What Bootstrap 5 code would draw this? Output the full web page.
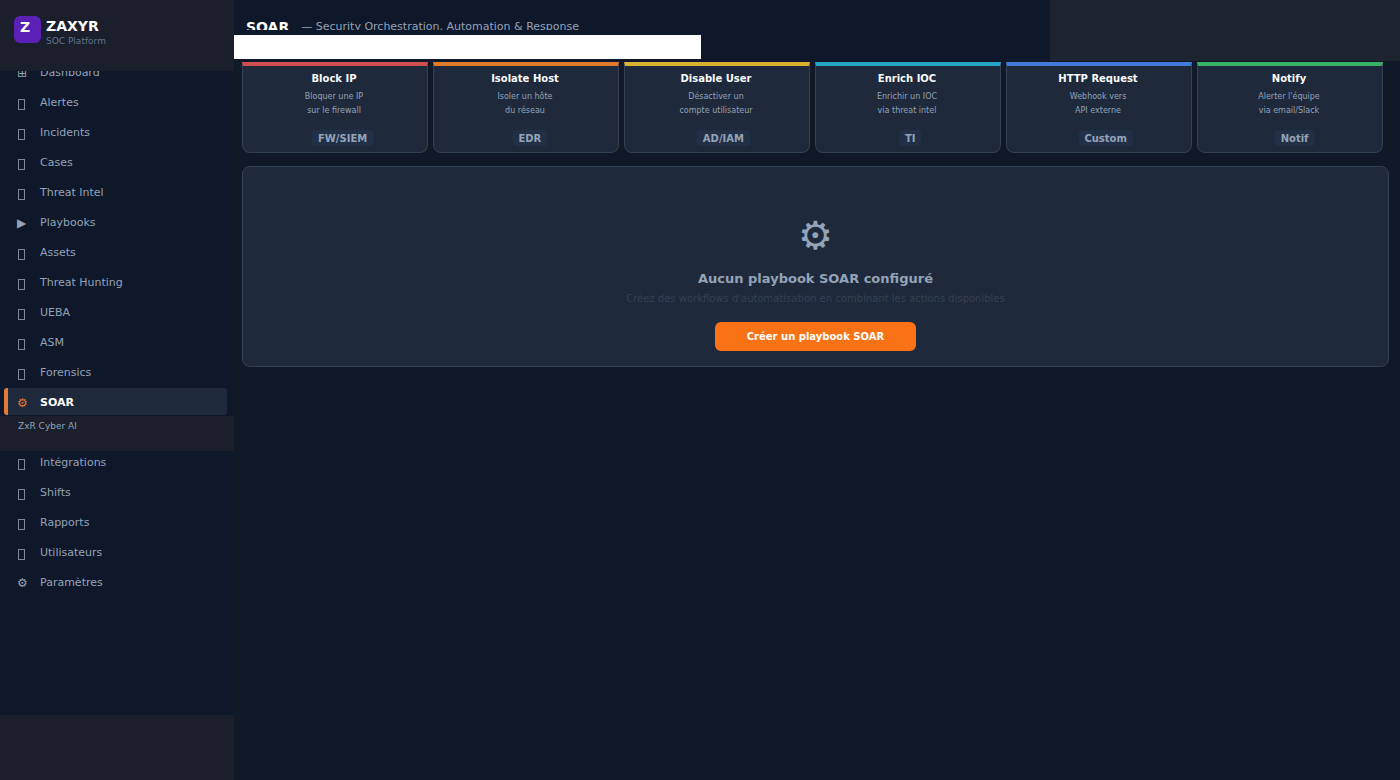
<!DOCTYPE html>
<html lang="fr">
<head>
<meta charset="utf-8">
<meta name="viewport" content="width=device-width, initial-scale=1">
<title>ZAXYR — SOAR</title>
<link href="https://cdn.jsdelivr.net/npm/bootstrap@5.3.0/dist/css/bootstrap.min.css" rel="stylesheet">
<style>
  body { background: #111827; color: #94a3b8; font: 11px/14px "DejaVu Sans", sans-serif; }
  .sidebar { width: 234px; background: #0f172a; }
  .brand { height: 71px; background: #1a1f2b; padding: 16px 14px; gap: 5px; z-index: 1; }
  .logo { width: 27px; height: 27px; border-radius: 6px; background: #5b21b6; font-size: 14px; line-height: 22px; padding-left: 6px; }
  .brand-name { font-size: 14px; line-height: 20px; }
  .brand-sub { font-size: 9px; line-height: 10px; color: #64748b; }
  .side-nav { margin-top: -14px; }
  .side-link { height: 30px; padding: 2px 0 0 17px; gap: 13px; color: #94a3b8; }
  .side-link:hover { color: #fff; }
  .side-link.active { height: 27px; margin: 1px 7px 1px 4px; padding-left: 9px; border-left: 4px solid #e07b39; border-radius: 3px; background: #1e293b; color: #fff; font-weight: 700; }
  .side-link.active .ico { color: #e07b39; font-weight: 400; }
  .ico { width: 10px; font-size: 12px; }
  .box { display: block; width: 7px; height: 11px; border: 1px solid #7b889c; margin: 2px 0 0 1px; }
  .ai-block { height: 35px; margin-bottom: -4px; padding: 3px 18px; background: #1a1f2b; font-size: 9px; position: relative; z-index: 1; }
  .side-foot { height: 65px; background: #1a1f2b; }
  .topbar { height: 61px; background: #0f172a; }
  .heading { height: 30px; padding: 18px 12px 0; gap: 12px; line-height: 18px; }
  .heading h1 { font-size: 14px; line-height: 18px; }
  .strip { width: 57.2%; height: 24px; margin-top: 5px; background: #fff; }
  .topbar-end { width: 30%; background: #1e2330; }
  .content { padding: 1px 11px 0 8px; }
  .actions { display: grid; grid-template-columns: repeat(6, 1fr); gap: 5px; padding-right: 6px; margin-bottom: 13px; }
  .action { height: 91px; background: #1e293b; border: 1px solid #334155; border-top: 4px solid var(--tone); border-radius: 0 0 8px 8px; padding: 6px 2px 0 0; }
  .action h2 { font-size: 10px; line-height: 14px; color: #f8fafc; margin-bottom: 4px; }
  .action p { font-size: 8px; margin-bottom: 12px; }
  .tag { background: #223047; border-radius: 3px; font-size: 10px; line-height: 14px; padding: 2px 6px 0; transform: translateX(14%); }
  .t-red { --tone: #cf4f4f; } .t-orange { --tone: #df7a2c; } .t-yellow { --tone: #d9b031; }
  .t-cyan { --tone: #25a5c4; } .t-blue { --tone: #4479dc; } .t-green { --tone: #37b163; }
  .panel { height: 201px; background: #1e293b; border: 1px solid #334155; border-radius: 8px; padding-top: 46px; }
  .gear { font-size: 39px; line-height: 46px; }
  .panel h2 { font-size: 13px; line-height: 18px; margin: 11px 0 4px; }
  .hint { font-size: 10px; color: #334155; margin-bottom: 16px; }
  .btn-create { background: #f97316; color: #fff; font-size: 10px; line-height: 15px; padding: 7px 32px; border: 0; border-radius: 6px; }
  .btn-create:hover { background: #ea6a10; color: #fff; }
</style>
</head>
<body>
<div class="d-flex min-vh-100">
  <aside class="sidebar d-flex flex-column flex-shrink-0">
    <div class="brand d-flex position-relative">
      <div class="logo text-white fw-bold">Z</div>
      <div>
        <div class="brand-name text-white fw-bold">ZAXYR</div>
        <div class="brand-sub">SOC Platform</div>
      </div>
    </div>
    <nav class="side-nav nav flex-column flex-nowrap">
      <a class="side-link d-flex align-items-center text-decoration-none" href="#"><span class="ico">⊞</span>Dashboard</a>
      <a class="side-link d-flex align-items-center text-decoration-none" href="#"><span class="ico"><i class="box"></i></span>Alertes</a>
      <a class="side-link d-flex align-items-center text-decoration-none" href="#"><span class="ico"><i class="box"></i></span>Incidents</a>
      <a class="side-link d-flex align-items-center text-decoration-none" href="#"><span class="ico"><i class="box"></i></span>Cases</a>
      <a class="side-link d-flex align-items-center text-decoration-none" href="#"><span class="ico"><i class="box"></i></span>Threat Intel</a>
      <a class="side-link d-flex align-items-center text-decoration-none" href="#"><span class="ico">▶</span>Playbooks</a>
      <a class="side-link d-flex align-items-center text-decoration-none" href="#"><span class="ico"><i class="box"></i></span>Assets</a>
      <a class="side-link d-flex align-items-center text-decoration-none" href="#"><span class="ico"><i class="box"></i></span>Threat Hunting</a>
      <a class="side-link d-flex align-items-center text-decoration-none" href="#"><span class="ico"><i class="box"></i></span>UEBA</a>
      <a class="side-link d-flex align-items-center text-decoration-none" href="#"><span class="ico"><i class="box"></i></span>ASM</a>
      <a class="side-link d-flex align-items-center text-decoration-none" href="#"><span class="ico"><i class="box"></i></span>Forensics</a>
      <a class="side-link active d-flex align-items-center text-decoration-none" href="#" aria-current="page"><span class="ico">⚙</span>SOAR</a>
      <div class="ai-block">ZxR Cyber AI</div>
      <a class="side-link d-flex align-items-center text-decoration-none" href="#"><span class="ico"><i class="box"></i></span>Intégrations</a>
      <a class="side-link d-flex align-items-center text-decoration-none" href="#"><span class="ico"><i class="box"></i></span>Shifts</a>
      <a class="side-link d-flex align-items-center text-decoration-none" href="#"><span class="ico"><i class="box"></i></span>Rapports</a>
      <a class="side-link d-flex align-items-center text-decoration-none" href="#"><span class="ico"><i class="box"></i></span>Utilisateurs</a>
      <a class="side-link d-flex align-items-center text-decoration-none" href="#"><span class="ico">⚙</span>Paramètres</a>
    </nav>
    <div class="side-foot mt-auto"></div>
  </aside>
  <main class="flex-grow-1">
    <header class="topbar d-flex">
      <div class="flex-grow-1">
        <div class="heading d-flex overflow-hidden">
          <h1 class="text-white fw-bold mb-0">SOAR</h1>
          <span>— Security Orchestration, Automation &amp; Response</span>
        </div>
        <div class="strip"></div>
      </div>
      <div class="topbar-end"></div>
    </header>
    <div class="content">
      <section class="actions text-center">
        <article class="action t-red"><h2 class="fw-bold">Block IP</h2><p>Bloquer une IP<br>sur le firewall</p><span class="tag d-inline-block fw-bold">FW/SIEM</span></article>
        <article class="action t-orange"><h2 class="fw-bold">Isolate Host</h2><p>Isoler un hôte<br>du réseau</p><span class="tag d-inline-block fw-bold">EDR</span></article>
        <article class="action t-yellow"><h2 class="fw-bold">Disable User</h2><p>Désactiver un<br>compte utilisateur</p><span class="tag d-inline-block fw-bold">AD/IAM</span></article>
        <article class="action t-cyan"><h2 class="fw-bold">Enrich IOC</h2><p>Enrichir un IOC<br>via threat intel</p><span class="tag d-inline-block fw-bold">TI</span></article>
        <article class="action t-blue"><h2 class="fw-bold">HTTP Request</h2><p>Webhook vers<br>API externe</p><span class="tag d-inline-block fw-bold">Custom</span></article>
        <article class="action t-green"><h2 class="fw-bold">Notify</h2><p>Alerter l'équipe<br>via email/Slack</p><span class="tag d-inline-block fw-bold">Notif</span></article>
      </section>
      <section class="panel text-center">
        <div class="gear">⚙</div>
        <h2 class="fw-bold">Aucun playbook SOAR configuré</h2>
        <p class="hint">Créez des workflows d'automatisation en combinant les actions disponibles</p>
        <button type="button" class="btn btn-create fw-bold">Créer un playbook SOAR</button>
      </section>
    </div>
  </main>
</div>
<script src="https://cdn.jsdelivr.net/npm/bootstrap@5.3.0/dist/js/bootstrap.bundle.min.js"></script>
</body>
</html>
